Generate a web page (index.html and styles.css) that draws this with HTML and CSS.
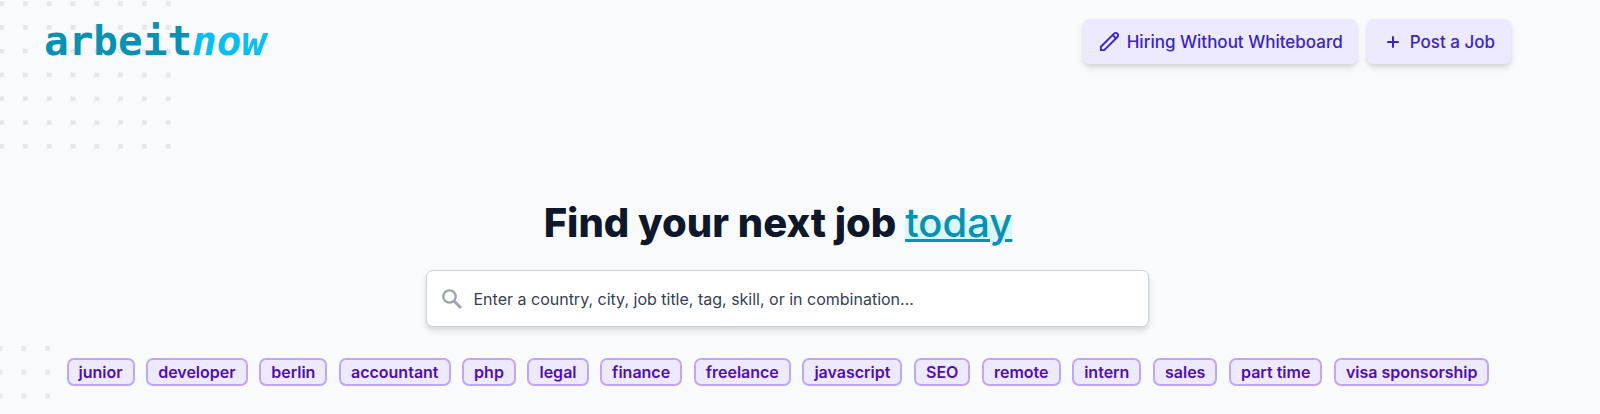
FILE: index.html
```html
<!DOCTYPE html>
<html lang="en">
<head>
<meta charset="utf-8">
<meta name="viewport" content="width=device-width, initial-scale=1">
<title>arbeitnow</title>
<link rel="stylesheet" href="styles.css">
</head>
<body>
<div class="page">
  <svg class="dots dots-top" aria-hidden="true">
    <defs><pattern id="dots-a" x="-0.8" y="1.2" width="23.8" height="23.8" patternUnits="userSpaceOnUse"><rect width="4.8" height="4.8" fill="#e5e7eb"/></pattern></defs>
    <rect width="100%" height="100%" fill="url(#dots-a)"/>
  </svg>
  <svg class="dots dots-bottom" aria-hidden="true">
    <defs><pattern id="dots-b" x="-2.4" y="0" width="23.8" height="23.8" patternUnits="userSpaceOnUse"><rect width="4.8" height="4.8" fill="#e5e7eb"/></pattern></defs>
    <rect width="100%" height="100%" fill="url(#dots-b)"/>
  </svg>

  <header class="header">
    <a class="logo" href="#">arbeit<span class="logo-now">now</span></a>
    <nav class="actions">
      <a class="button" href="#">
        <svg class="icon-pencil" viewBox="0 0 24 24" fill="none" stroke="currentColor" stroke-width="2" stroke-linecap="round" stroke-linejoin="round" aria-hidden="true"><path d="M15.232 5.232l3.536 3.536m-2.036-5.036a2.5 2.5 0 113.536 3.536L6.5 21.036H3v-3.572L16.732 3.732z"/></svg>
        Hiring Without Whiteboard
      </a>
      <a class="button button-post" href="#">
        <svg class="icon-plus" viewBox="0 0 12 12" fill="none" stroke="currentColor" stroke-width="2" stroke-linecap="round" aria-hidden="true"><path d="M6 1v10M1 6h10"/></svg>
        Post a Job
      </a>
    </nav>
  </header>

  <main class="main">
    <h1 class="title">Find your next job <span class="today">today</span></h1>
    <form class="search" role="search">
      <label class="search-label" for="q" aria-label="Search jobs">
        <svg class="icon-search" viewBox="0 0 20 20" fill="none" stroke="currentColor" stroke-width="2.3" aria-hidden="true"><circle cx="7.5" cy="7.5" r="6.2"/><path d="M12 12l7 7" stroke-width="2.8"/></svg>
      </label>
      <input class="search-input" id="q" type="text" placeholder="Enter a country, city, job title, tag, skill, or in combination...">
    </form>
    <nav class="tags">
      <a class="tag" href="#">junior</a>
      <a class="tag" href="#">developer</a>
      <a class="tag" href="#">berlin</a>
      <a class="tag" href="#">accountant</a>
      <a class="tag" href="#">php</a>
      <a class="tag" href="#">legal</a>
      <a class="tag" href="#">finance</a>
      <a class="tag" href="#">freelance</a>
      <a class="tag" href="#">javascript</a>
      <a class="tag" href="#">SEO</a>
      <a class="tag" href="#">remote</a>
      <a class="tag" href="#">intern</a>
      <a class="tag" href="#">sales</a>
      <a class="tag" href="#">part time</a>
      <a class="tag" href="#">visa sponsorship</a>
    </nav>
  </main>
</div>
</body>
</html>
```

FILE: styles.css
```css
* { box-sizing: border-box; }

body {
  margin: 0;
  background: #f9fafc;
  font-family: Inter, "Liberation Sans", sans-serif;
  font-size: 16px;
  line-height: 24px;
}

.page {
  position: relative;
  min-height: 100vh;
  padding: 19px 44px 28px;
  overflow: hidden;
}

.dots { position: absolute; left: 0; }
.dots-top { top: 0; width: 172px; height: 150px; }
.dots-bottom { bottom: 0; width: 51px; height: 68px; }

.header {
  position: relative;
  display: flex;
  justify-content: space-between;
  align-items: flex-start;
  padding-right: 45px;
}

.logo {
  font-family: "DejaVu Sans Mono", monospace;
  font-size: 41px;
  font-weight: 700;
  line-height: 45px;
  color: #0891b2;
  text-decoration: none;
}
.logo-now { font-style: italic; color: #06bfee; }

.actions { display: flex; gap: 10px; }

.button {
  display: flex;
  align-items: center;
  gap: 6px;
  height: 45px;
  padding: 0 14px 0 15px;
  border-radius: 7px;
  background: #ede9fe;
  box-shadow: 0 4px 6px rgba(0, 0, 0, 0.1), 0 2px 4px rgba(0, 0, 0, 0.06);
  color: #3a25c4;
  font-size: 17px;
  font-weight: 500;
  text-decoration: none;
  white-space: nowrap;
}
.button-post { gap: 11px; padding: 0 16px 0 20px; }
.icon-pencil { width: 23px; height: 23px; }
.icon-plus { width: 12px; height: 12px; }

.main {
  position: relative;
  display: flex;
  flex-direction: column;
  align-items: center;
  padding-top: 134px;
}

.title {
  margin: 0;
  padding-right: 44px;
  font-size: 40px;
  font-weight: 800;
  line-height: 50px;
  color: #0f172a;
}
.today {
  font-weight: 500;
  color: #0891b2;
  text-decoration: underline;
  text-decoration-thickness: 3px;
  background: linear-gradient(transparent 45%, #d8f7fc 45%, #d8f7fc 90%, transparent 90%);
}

.search {
  display: flex;
  align-items: center;
  width: 100%;
  max-width: 723px;
  height: 57px;
  margin: 22px 26px 31px 0;
  border: 1px solid #cbd2dc;
  border-radius: 7px;
  background: #fff;
  box-shadow: 0 4px 6px rgba(0, 0, 0, 0.1), 0 2px 4px rgba(0, 0, 0, 0.06);
}
.search-label { display: flex; padding: 0 12px 0 15px; color: #9ca3af; }
.icon-search { width: 20px; height: 20px; }
.search-input {
  flex: 1;
  height: 100%;
  padding: 0;
  border: 0;
  outline: 0;
  background: transparent;
  font: inherit;
  color: #334155;
}
.search-input::placeholder { color: #334155; opacity: 1; }

.tags {
  display: flex;
  flex-wrap: wrap;
  justify-content: space-between;
  gap: 11px;
  width: 100%;
  max-width: 1423px;
  margin-right: 44px;
}
.tag {
  padding: 0 10px;
  border: 2px solid #c0a6f6;
  border-radius: 7px;
  background: #ede9fe;
  color: #500fae;
  font-weight: 600;
  text-decoration: none;
}
```
